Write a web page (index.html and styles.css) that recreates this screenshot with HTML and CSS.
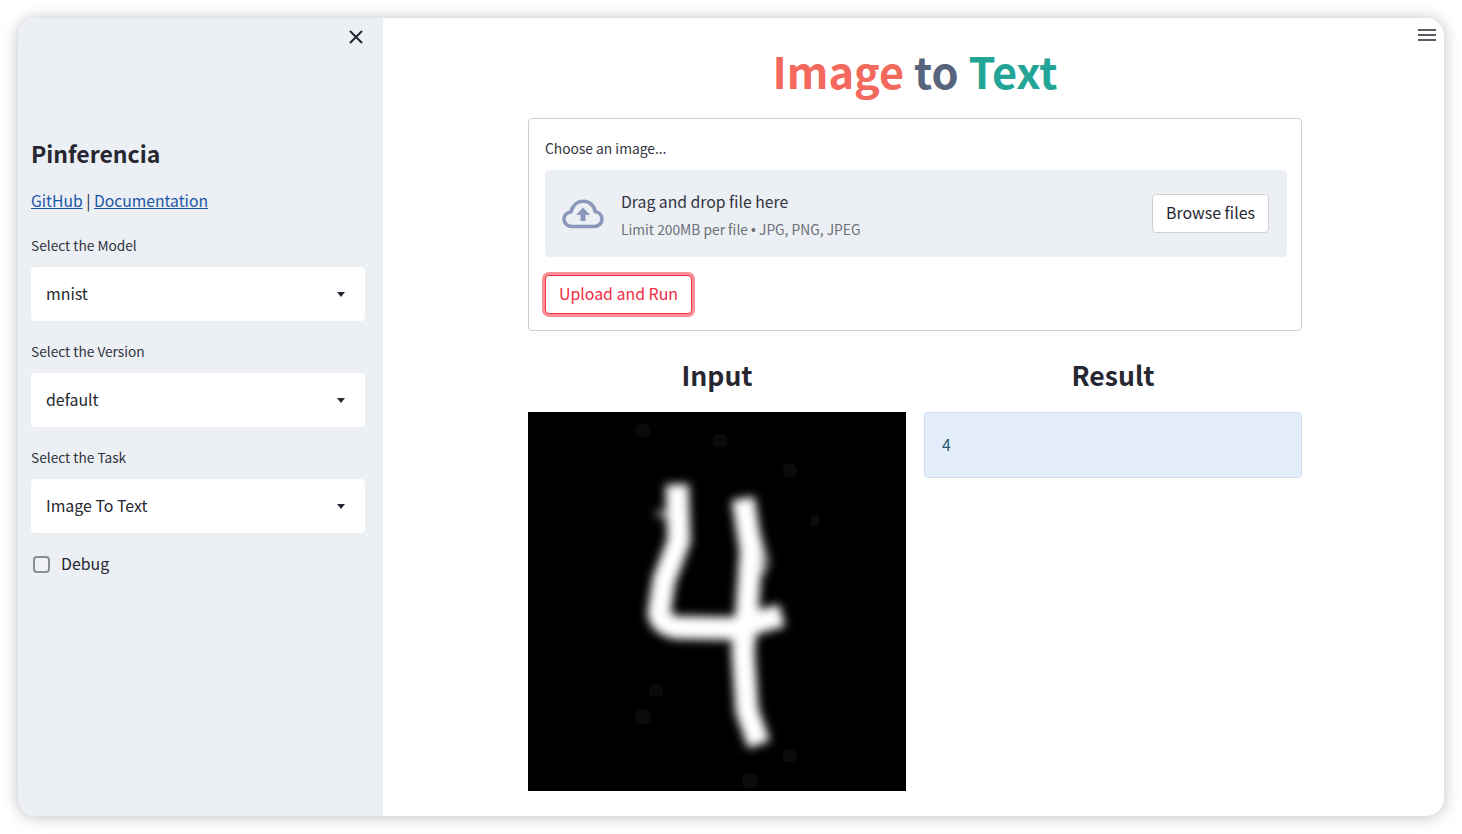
FILE: index.html
```html
<!DOCTYPE html>
<html lang="en">
<head>
<meta charset="utf-8">
<title>Image to Text</title>
<link rel="stylesheet" href="styles.css">
</head>
<body>
<div class="window">
  <aside class="sidebar">
    <div class="close-row">
      <svg class="close-icon" viewBox="0 0 14 14"><path d="M1 1 13 13M13 1 1 13"/></svg>
    </div>
    <h2 class="brand">Pinferencia</h2>
    <p class="links"><a href="#">GitHub</a> | <a href="#">Documentation</a></p>
    <div class="field">
      <label class="field-label">Select the Model</label>
      <div class="select"><span>mnist</span><i class="caret"></i></div>
    </div>
    <div class="field">
      <label class="field-label">Select the Version</label>
      <div class="select"><span>default</span><i class="caret"></i></div>
    </div>
    <div class="field">
      <label class="field-label">Select the Task</label>
      <div class="select"><span>Image To Text</span><i class="caret"></i></div>
    </div>
    <div class="check"><i class="box"></i><span>Debug</span></div>
  </aside>
  <main class="main">
    <svg class="menu-icon" viewBox="0 0 18 14"><path d="M0 2H18M0 7H18M0 12H18"/></svg>
    <h1 class="title"><span class="t-red">Image</span> <span class="t-gray">to</span> <span class="t-teal">Text</span></h1>
    <section class="form">
      <div class="form-label">Choose an image...</div>
      <div class="drop">
        <svg class="cloud" viewBox="0 0 42 30"><path class="cloud-line" d="M10 27.5C5.5 27.5 2 24.4 2 20.2 2 16.3 5 13.4 8.8 13 10.6 6.6 15.4 2.2 21.3 2.2 27.4 2.2 32.2 6.5 33.3 12.7 37.2 13.2 40 16.3 40 20.2 40 24.4 36.5 27.5 32 27.5Z"/><path class="cloud-arrow" d="M21 8.5 28 16H23.5V22H18.5V16H14Z"/></svg>
        <div class="drop-text">
          <div class="drop-title">Drag and drop file here</div>
          <div class="drop-sub">Limit 200MB per file <span class="dot">•</span> JPG, PNG, JPEG</div>
        </div>
        <button class="browse">Browse files</button>
      </div>
      <button class="run">Upload and Run</button>
    </section>
    <section class="cols">
      <div class="col">
        <h3 class="col-title">Input</h3>
        <div class="digit">
          <svg viewBox="528 412 378 378">
            <defs>
              <filter id="soft" x="-20%" y="-20%" width="140%" height="140%"><feGaussianBlur stdDeviation="4.8"/></filter>
              <filter id="softer" x="-100%" y="-100%" width="300%" height="300%"><feGaussianBlur stdDeviation="6"/></filter>
            </defs>
            <g class="specks" filter="url(#softer)">
              <circle cx="643" cy="430" r="8"/><circle cx="720" cy="440" r="8"/><circle cx="790" cy="470" r="8"/><circle cx="656" cy="690" r="8"/><circle cx="643" cy="716" r="9"/><circle cx="750" cy="780" r="9"/><circle cx="790" cy="755" r="8"/><circle cx="815" cy="520" r="7"/>
            </g>
            <g class="strokes" filter="url(#soft)">
              <path d="M677 484 679 540 664 580 659 612Q660 624 677 627L733 628 782 615"/>
              <path d="M743 498 751 550 747 610 743 650 747 710 759 744"/>
              <path class="thin" d="M656 513 668 514M752 520 766 560 762 574"/>
            </g>
          </svg>
        </div>
      </div>
      <div class="col">
        <h3 class="col-title">Result</h3>
        <div class="info">4</div>
      </div>
    </section>
  </main>
</div>
</body>
</html>
```
FILE: styles.css
```css
* { box-sizing: border-box; }
html, body { height: 100%; }
body {
  margin: 0;
  padding: 18px;
  background: #fff;
  color: #262730;
  font-family: "Noto Sans CJK SC", "Noto Sans", sans-serif;
  overflow: hidden;
}
.window {
  display: flex;
  height: 798px;
  border-radius: 18px;
  overflow: hidden;
  background: #fff;
  box-shadow: 0 1px 16px rgba(0, 0, 0, .26);
}
.sidebar {
  flex: 0 0 365px;
  background: #eceff4;
  padding: 0 18px 0 13px;
}
.close-row { display: flex; justify-content: flex-end; height: 113px; padding: 12px 2px 0 0; }
.close-icon { width: 14px; height: 14px; fill: none; stroke: #262730; stroke-width: 2; }
.brand { margin: 0; font-size: 23px; line-height: 44px; font-weight: 700; color: #262730; }
.links { margin: 13px 0 0; font-size: 15.7px; line-height: 26px; color: #262730; }
.links a { color: #1a56a8; }
.field { margin-top: 21px; }
.field-label { display: block; font-size: 13.7px; line-height: 20px; color: #31333f; margin-bottom: 12px; }
.select {
  display: flex;
  align-items: center;
  justify-content: space-between;
  height: 54px;
  padding: 0 19px 2px 15px;
  background: #fff;
  border-radius: 4px;
  font-size: 15.9px;
}
.field + .field { margin-top: 20px; }
.caret { width: 0; height: 0; border: 4.5px solid transparent; border-top: 5px solid #262730; border-bottom: 0; margin: 3px 1px 0 0; }
.check { display: flex; align-items: center; gap: 11px; margin-top: 19px; padding-left: 2px; font-size: 15.9px; line-height: 24px; }
.box { width: 17px; height: 17px; border: 2px solid #8a8d96; border-radius: 4px; background: #f0f2f6; }
.main { flex: 1; min-width: 0; position: relative; padding: 0 142px 0 145px; }
.menu-icon { position: absolute; top: 10px; right: 8px; width: 18px; height: 14px; fill: none; stroke: #262730; stroke-width: 1.7; }
.title { margin: 0; height: 100px; padding-top: 23px; text-align: center; font-size: 43.3px; line-height: 58px; font-weight: 700; }
.t-red { color: #f4695d; }
.t-gray { color: #56657c; }
.t-teal { color: #22a596; }
.form { height: 213px; border: 1px solid #cfd0d4; border-radius: 4px; padding: 16px 14px 0 16px; }
.form-label { font-size: 13.8px; line-height: 26px; color: #31333f; margin-bottom: 9px; }
.drop { display: flex; align-items: center; height: 87px; padding: 0 18px 0 17px; background: #eceff4; border-radius: 4px; }
.cloud { width: 42px; height: 30px; flex: none; margin-right: 17px; }
.cloud-line { fill: none; stroke: #8b97bb; stroke-width: 3.6; stroke-linejoin: round; }
.cloud-arrow { fill: #8b97bb; }
.drop-text { flex: 1; }
.drop-title { font-size: 15.75px; line-height: 26px; color: #31333f; margin-top: 4px; }
.drop-sub { font-size: 13.8px; line-height: 22px; margin-top: 3px; color: #6b6f78; }
.dot { font-family: "Liberation Sans", sans-serif; }
.browse { width: 117px; height: 39px; background: #fff; border: 1px solid #cfd0d4; border-radius: 4px; font: inherit; font-size: 15.9px; color: #262730; padding: 0 0 2px; }
.run { display: block; width: 147px; height: 39px; margin: 18px 0 0; background: #fff; border: 1px solid #f0324a; border-radius: 4px; box-shadow: 0 0 0 3px #fb8f96; font: inherit; font-size: 15.9px; color: #ef2b43; padding: 0 0 2px; }
.cols { display: grid; grid-template-columns: 378px 378px; gap: 18px; margin-top: 24px; }
.col-title { margin: 0 0 13px; height: 44px; padding-bottom: 4px; text-align: center; font-size: 26.6px; line-height: 40px; font-weight: 700; color: #262730; }
.digit { width: 378px; height: 379px; background: #000; }
.digit svg { display: block; width: 100%; height: 100%; }
.strokes { fill: none; stroke: #fff; stroke-width: 23; stroke-linecap: butt; stroke-linejoin: round; }
.strokes .thin { stroke-width: 7; opacity: .55; }
.specks { fill: #090909; }
.info { height: 66px; padding: 0 17px 1px; display: flex; align-items: center; background: #e4eefb; border: 1px solid #cfe0f3; border-radius: 4px; font-size: 15.9px; color: #2a5a70; }
```
